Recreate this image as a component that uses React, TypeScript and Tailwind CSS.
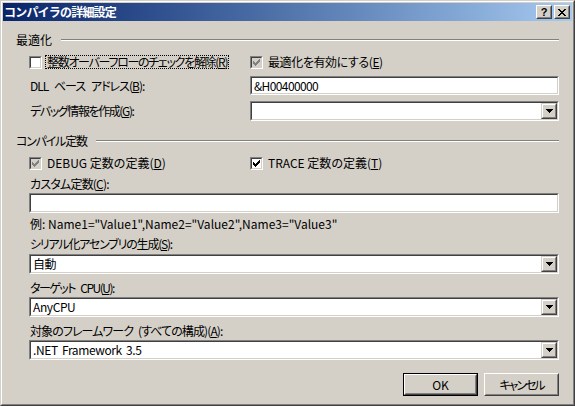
import React from "react";

const font = "font-['Noto_Sans_CJK_JP',sans-serif] [font-feature-settings:'palt'] text-[12px] leading-[14px] text-black";

function CheckMark({ color }: { color: string }) {
    return (
        <svg width="7" height="7" viewBox="0 0 7 7" shapeRendering="crispEdges" className="block">
            <path
                fill={color}
                d="M6 0h1v1h-1z M5 1h2v1h-2z M0 2h1v1h-1z M4 2h3v1h-3z M0 3h2v1h-2z M3 3h3v1h-3z M0 4h5v1h-5z M1 5h3v1h-3z M2 6h1v1h-1z"
            />
        </svg>
    );
}

function CheckBox({ checked, disabled }: { checked?: boolean; disabled?: boolean }) {
    return (
        <div className="w-[13px] h-[13px] shrink-0 border border-t-[#808080] border-l-[#808080] border-r-white border-b-white">
            <div
                className={`w-full h-full flex items-center justify-center border border-t-[#404040] border-l-[#404040] border-r-[#d4d0c8] border-b-[#d4d0c8] ${disabled ? "bg-[#d4d0c8]" : "bg-white"}`}
            >
                {checked && <CheckMark color={disabled ? "#808080" : "#000000"} />}
            </div>
        </div>
    );
}

function Sunken({ children, className = "" }: { children?: React.ReactNode; className?: string }) {
    return (
        <div className={`border border-t-[#808080] border-l-[#808080] border-r-white border-b-white ${className}`}>
            <div className="w-full h-full bg-white border border-t-[#404040] border-l-[#404040] border-r-[#d4d0c8] border-b-[#d4d0c8] flex items-center">
                {children}
            </div>
        </div>
    );
}

function DropArrow() {
    return (
        <div className="w-[16px] h-full shrink-0 ml-auto border border-t-[#d4d0c8] border-l-[#d4d0c8] border-r-[#404040] border-b-[#404040]">
            <div className="w-full h-full bg-[#d4d0c8] flex items-center justify-center border border-t-white border-l-white border-r-[#808080] border-b-[#808080]">
                <svg width="7" height="4" viewBox="0 0 7 4" shapeRendering="crispEdges" className="block">
                    <path fill="#000" d="M0 0h7v1h-7z M1 1h5v1h-5z M2 2h3v1h-3z M3 3h1v1h-1z" />
                </svg>
            </div>
        </div>
    );
}

function Combo({ value = "", className = "" }: { value?: string; className?: string }) {
    return (
        <Sunken className={`h-[20px] ${className}`}>
            <span className="pl-[2px] flex-1 whitespace-nowrap tracking-[-0.4px] [word-spacing:2px]">{value}</span>
            <DropArrow />
        </Sunken>
    );
}

function Group({ title, tight }: { title: string; tight?: boolean }) {
    return (
        <div className="h-[14px] flex items-center">
            <span className={`whitespace-nowrap ${tight ? "tracking-[-1.2px]" : ""}`}>{title}</span>
            <div className="flex-1 ml-[9px] h-[2px] border-t border-t-[#808080] border-b border-b-white" />
        </div>
    );
}

function PushButton({ children, isDefault }: { children: React.ReactNode; isDefault?: boolean }) {
    const face = (
        <div className="w-full h-full border border-t-white border-l-white border-r-[#404040] border-b-[#404040]">
            <div className="w-full h-full flex items-center justify-center border border-t-[#d4d0c8] border-l-[#d4d0c8] border-r-[#808080] border-b-[#808080]">
                {children}
            </div>
        </div>
    );
    return (
        <div className={`w-[75px] h-[23px] ${isDefault ? "border border-black" : ""}`}>{face}</div>
    );
}

function TitleButton({ children }: { children: React.ReactNode }) {
    return (
        <div className="w-[16px] h-[14px] border border-t-white border-l-white border-r-[#404040] border-b-[#404040]">
            <div className="w-full h-full bg-[#d4d0c8] flex items-center justify-center border border-t-[#d4d0c8] border-l-[#d4d0c8] border-r-[#808080] border-b-[#808080]">
                {children}
            </div>
        </div>
    );
}

export default function App() {
    return (
        <div className={`w-[575px] h-[406px] bg-[#d4d0c8] border border-t-[#d4d0c8] border-l-[#d4d0c8] border-r-[#404040] border-b-[#404040] ${font}`}>
            <div className="h-full border border-t-white border-l-white border-r-[#808080] border-b-[#808080] p-px flex flex-col">
                {/* title bar */}
                <div className="h-[18px] shrink-0 bg-linear-to-r from-[#0a246a] to-[#a6caf0] flex items-center pl-[1px] pr-[2px]">
                    <span className="text-white font-bold text-[12px] tracking-[-0.8px] [font-feature-settings:normal]">
                        コンパイラの詳細設定
                    </span>
                    <div className="ml-auto flex items-center gap-[2px]">
                        <TitleButton>
                            <span className="font-['Liberation_Sans',sans-serif] font-bold text-[11px] leading-[11px]">?</span>
                        </TitleButton>
                        <TitleButton>
                            <svg width="8" height="7" viewBox="0 0 8 7" shapeRendering="crispEdges" className="block">
                                <path
                                    fill="#000"
                                    d="M0 0h2v1h-2z M6 0h2v1h-2z M1 1h2v1h-2z M5 1h2v1h-2z M2 2h4v1h-4z M3 3h2v1h-2z M2 4h4v1h-4z M1 5h2v1h-2z M5 5h2v1h-2z M0 6h2v1h-2z M6 6h2v1h-2z"
                                />
                            </svg>
                        </TitleButton>
                    </div>
                </div>

                {/* client area */}
                <div className="flex-1 px-[13px] pt-[12px] flex flex-col">
                    <Group title="最適化" />
                    <div className="pl-[13px] flex flex-col">
                        <div className="mt-[8px] h-[14px] flex items-center">
                            <div className="w-[221px] shrink-0 flex items-center">
                                <CheckBox />
                                <span className="ml-[3px] px-px border border-dotted border-black whitespace-nowrap leading-[12px] tracking-[-1.3px]">
                                    整数オーバーフローのチェックを解除(<u>R</u>)
                                </span>
                            </div>
                            <div className="flex items-center">
                                <CheckBox checked disabled />
                                <span className="ml-[5px] whitespace-nowrap tracking-[-0.4px]">最適化を有効にする(<u>E</u>)</span>
                            </div>
                        </div>
                        <div className="mt-[7px] flex items-center">
                            <span className="w-[221px] shrink-0 pl-px whitespace-nowrap tracking-[-1px] [word-spacing:4px]">DLL ベース アドレス(<u>B</u>):</span>
                            <Sunken className="flex-1 h-[19px]">
                                <span className="pl-[2px] tracking-[-0.6px]">&amp;H00400000</span>
                            </Sunken>
                        </div>
                        <div className="mt-[6px] flex items-center">
                            <span className="w-[221px] shrink-0 pl-px whitespace-nowrap tracking-[-1.4px]">デバッグ情報を作成(<u>G</u>):</span>
                            <Combo className="flex-1" />
                        </div>
                    </div>

                    <div className="mt-[13px]">
                        <Group title="コンパイル定数" tight />
                    </div>
                    <div className="pl-[13px] flex flex-col">
                        <div className="mt-[8px] h-[14px] flex items-center">
                            <div className="w-[221px] shrink-0 flex items-center">
                                <CheckBox checked disabled />
                                <span className="ml-[5px] whitespace-nowrap">DEBUG 定数の定義(<u>D</u>)</span>
                            </div>
                            <div className="flex items-center">
                                <CheckBox checked />
                                <span className="ml-[5px] whitespace-nowrap">TRACE 定数の定義(<u>T</u>)</span>
                            </div>
                        </div>
                        <span className="mt-[7px] h-[14px] pl-px tracking-[-0.8px]">カスタム定数(<u>C</u>):</span>
                        <Sunken className="mt-[2px] h-[20px]" />
                        <span className="mt-[4px] h-[14px] pl-px whitespace-nowrap">
                            例: Name1="Value1",Name2="Value2",Name3="Value3"
                        </span>
                        <span className="mt-[6px] h-[14px] pl-px tracking-[-1.2px]">シリアル化アセンブリの生成(<u>S</u>):</span>
                        <Combo className="mt-[3px]" value="自動" />
                        <span className="mt-[7px] h-[14px] pl-px tracking-[-1.5px] [word-spacing:4px]">ターゲット CPU(<u>U</u>):</span>
                        <Combo className="mt-[2px]" value="AnyCPU" />
                        <span className="mt-[7px] h-[14px] pl-px tracking-[-0.9px] [word-spacing:3px]">対象のフレームワーク (すべての構成)(<u>A</u>):</span>
                        <Combo className="mt-[2px]" value=".NET Framework 3.5" />
                    </div>

                    <div className="mt-[13px] flex justify-end gap-[6px]">
                        <PushButton isDefault>OK</PushButton>
                        <PushButton>
                            <span className="tracking-[-2px]">キャンセル</span>
                        </PushButton>
                    </div>
                </div>
            </div>
        </div>
    );
}
